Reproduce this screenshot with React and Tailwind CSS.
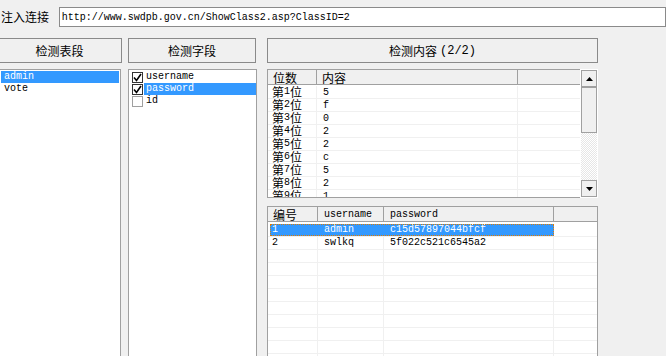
import React from 'react'

const cn = "font-['Noto_Sans_CJK_SC',sans-serif] text-[12px] leading-[12px]"
const mono = "font-['Liberation_Mono',monospace] text-[10px] leading-[12px]"

const digits = [
  ['1', '5'],
  ['2', 'f'],
  ['3', '0'],
  ['4', '2'],
  ['5', '2'],
  ['6', 'c'],
  ['7', '5'],
  ['8', '2'],
  ['9', '1'],
]

const users = [
  { id: '1', name: 'admin', pass: 'c15d57897044bfcf' },
  { id: '2', name: 'swlkq', pass: '5f022c521c6545a2' },
]

const Check = () => (
  <svg width="9" height="9" viewBox="0 0 9 9">
    <path d="M1 4.5 L3.5 7.5 L8 1" fill="none" stroke="#000" strokeWidth="1.6" />
  </svg>
)

const Arrow = ({ down }) => (
  <svg width="7" height="4" viewBox="0 0 7 4">
    <path d={down ? 'M0 0 H7 L3.5 4 Z' : 'M0 4 H7 L3.5 0 Z'} fill="#000" />
  </svg>
)

const Button = ({ children, className = '' }) => (
  <div className={`h-[25px] border border-[#8a8a8a] bg-[#f0f0f0] flex items-center justify-center ${className}`}>
    {children}
  </div>
)

export default function App() {
  return (
    <div className="w-[666px] h-[356px] bg-[#f0f0f0] overflow-hidden text-black">
      {/* url row */}
      <div className="h-[38px] flex items-start pt-[7px]">
        <div className={`${cn} w-[60px] pl-[1px] pt-[4px]`}>注入连接</div>
        <div className={`${mono} h-[20px] w-[620px] border border-[#8a8a8a] bg-white flex items-center pl-[2px] pt-[1px]`}>
          http://www.swdpb.gov.cn/ShowClass2.asp?ClassID=2
        </div>
      </div>

      <div className="flex items-start">
        {/* tables column */}
        <div className="w-[125px] -ml-[3px] flex flex-col">
          <Button><span className={cn}>检测表段</span></Button>
          <div className="mt-[6px] w-[124px] h-[300px] border border-[#a0a0a0] bg-white pt-[1px] pl-[3px]">
            <div className={`${mono} h-[12px] bg-[#3399ff] text-white pl-[3px] mr-[1px]`}>admin</div>
            <div className={`${mono} h-[12px] pl-[3px]`}>vote</div>
          </div>
        </div>

        {/* fields column */}
        <div className="w-[129px] ml-[6px] flex flex-col">
          <Button className="w-[128px]"><span className={cn}>检测字段</span></Button>
          <div className="mt-[6px] w-[129px] h-[300px] border border-[#a0a0a0] bg-white pt-[1px] pl-[3px]">
            {[
              { t: 'username', on: true, sel: false },
              { t: 'password', on: true, sel: true },
              { t: 'id', on: false, sel: false },
            ].map(f => (
              <div key={f.t} className="h-[12px] flex items-center">
                <div className={`w-[11px] h-[11px] border bg-white flex items-center justify-center ${f.on ? 'border-[#333]' : 'border-[#a0a0a0]'}`}>
                  {f.on && <Check />}
                </div>
                <div className={`${mono} h-[12px] flex-1 ml-[1px] pl-[2px] ${f.sel ? 'bg-[#3399ff] text-white' : ''}`}>{f.t}</div>
              </div>
            ))}
          </div>
        </div>

        {/* content column */}
        <div className="w-[331px] ml-[10px] flex flex-col">
          <Button>
            <span className={cn}>检测内容</span>
            <span className="font-['Liberation_Mono',monospace] text-[12px] leading-[12px] ml-[3px]">(2/2)</span>
          </Button>

          {/* digits table */}
          <div className="mt-[6px] h-[129px] flex">
            <div className="flex-1 border border-r-0 border-[#a0a0a0] bg-white flex flex-col overflow-hidden">
              <div className="h-[16px] flex bg-[#f0f0f0] border-b border-[#a0a0a0]">
                <div className={`${cn} w-[49px] border-r border-[#a0a0a0] pl-[5px] pt-[2px]`}>位数</div>
                <div className={`${cn} w-[201px] border-r border-[#a0a0a0] pl-[5px] pt-[2px]`}>内容</div>
                <div className="flex-1" />
              </div>
              <div className="pt-[1px] flex flex-col">
                {digits.map(([n, v]) => (
                  <div key={n} className="h-[13px] shrink-0 flex border-b border-[#f0f0f0]">
                    <div className="w-[49px] border-r border-[#f0f0f0] pl-[4px] flex items-end">
                      <span className={cn}>第</span>
                      <span className={mono}>{n}</span>
                      <span className={cn}>位</span>
                    </div>
                    <div className={`${mono} w-[201px] border-r border-[#f0f0f0] pl-[6px] pt-[1px]`}>{v}</div>
                    <div className="flex-1" />
                  </div>
                ))}
              </div>
            </div>
            <div className="w-[18px] bg-white p-[1px] flex flex-col">
              <div className="h-[17px] border border-[#a0a0a0] bg-[#f0f0f0] flex items-center justify-center"><Arrow /></div>
              <div className="h-[46px] border border-[#a0a0a0] bg-[#f0f0f0]" />
              <div className="flex-1 bg-[repeating-conic-gradient(#e6e6e6_0%_25%,#ffffff_0%_50%)] bg-[length:2px_2px]" />
              <div className="h-[17px] border border-[#a0a0a0] bg-[#f0f0f0] flex items-center justify-center"><Arrow down /></div>
            </div>
          </div>

          {/* results table */}
          <div className="mt-[8px] h-[160px] border border-b-0 border-[#a0a0a0] bg-white flex flex-col">
            <div className="h-[16px] flex bg-[#f0f0f0] border-b border-[#a0a0a0]">
              <div className={`${cn} w-[50px] border-r border-[#a0a0a0] pl-[5px] pt-[2px]`}>编号</div>
              <div className={`${mono} w-[66px] border-r border-[#a0a0a0] pl-[6px] pt-[2px]`}>username</div>
              <div className={`${mono} w-[170px] border-r border-[#a0a0a0] pl-[6px] pt-[2px]`}>password</div>
              <div className="flex-1" />
            </div>
            <div className="pt-[2px] flex flex-col">
              {Array.from({ length: 11 }).map((_, i) => {
                const u = users[i]
                const sel = i === 0
                return (
                  <div key={i} className="h-[13px] shrink-0 flex border-b border-[#f0f0f0]">
                    <div className={`flex h-[12px] ml-[2px] ${sel ? 'bg-[#3399ff] text-white outline-1 outline-dotted outline-[#e07b00] -outline-offset-1' : ''}`}>
                      <div className={`${mono} w-[48px] pl-[2px] ${sel ? '' : 'border-r border-[#f0f0f0]'}`}>{u?.id}</div>
                      <div className={`${mono} w-[66px] pl-[6px] ${sel ? '' : 'border-r border-[#f0f0f0]'}`}>{u?.name}</div>
                      <div className={`${mono} w-[170px] pl-[6px] ${sel ? '' : 'border-r border-[#f0f0f0]'}`}>{u?.pass}</div>
                    </div>
                    <div className="flex-1" />
                  </div>
                )
              })}
            </div>
          </div>
        </div>
      </div>
    </div>
  )
}
